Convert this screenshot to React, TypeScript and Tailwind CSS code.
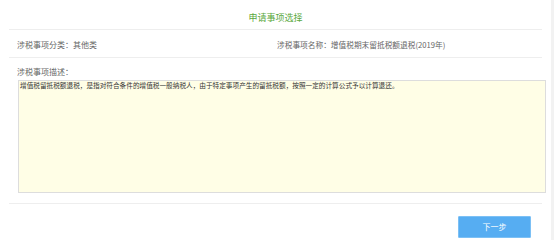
import React from "react";

const font = { fontFamily: '"Noto Sans CJK SC", "Liberation Sans", sans-serif' };

export default function App() {
  return (
    <div className="w-[554px] h-[240px] bg-white flex overflow-hidden" style={font}>
      <div className="w-[551px]">
        <div className="ml-[9px] w-[533px]">
          {/* title */}
          <div className="h-[30px] border-b border-[#eeeeee] pt-[13px] text-center text-[9px] leading-[10px] text-[#5aa83c]">
            申请事项选择
          </div>

          {/* info row */}
          <div className="h-[28px] border-b border-[#eeeeee] pt-[11px] pl-[8px] flex text-[8px] leading-[8px] text-[#666666]">
            <div className="w-[260px]">涉税事项分类：其他类</div>
            <div className="text-[7.7px]">涉税事项名称：增值税期末留抵税额退税(2019年)</div>
          </div>

          {/* description */}
          <div className="h-[146px] border-b border-[#eeeeee] pt-[10px]">
            <div className="pl-[8px] text-[8px] leading-[8px] text-[#666666]">涉税事项描述：</div>
            <div className="mt-[4px] ml-[9px] w-[528px] h-[113px] border border-[#dddddd] bg-[#fffee6] pl-[1px] text-[6.65px] leading-[8px] text-[#333333]">
              增值税留抵税额退税，是指对符合条件的增值税一般纳税人，由于特定事项产生的留抵税额，按照一定的计算公式予以计算退还。
            </div>
          </div>

          {/* footer */}
          <div className="flex justify-end pt-[12px] pr-[11px]">
            <button className="w-[73px] h-[22px] bg-[#56adf2] border border-[#7cc0f5] text-white text-[8px] leading-[8px] rounded-[1px]">
              下一步
            </button>
          </div>
        </div>
      </div>
      <div className="w-[3px] bg-[#f2f2f2]" />
    </div>
  );
}
